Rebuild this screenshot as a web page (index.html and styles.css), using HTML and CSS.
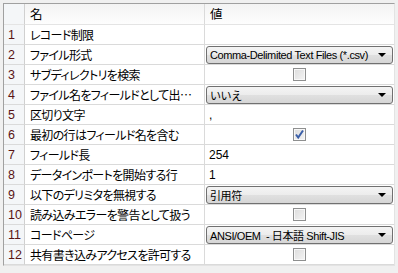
FILE: index.html
```html
<!DOCTYPE html>
<html lang="ja">
<head>
  <meta charset="UTF-8" />
  <title>プロパティ</title>
  <link rel="stylesheet" href="styles.css">
</head>
<body>
  <div class="frame">
    <div class="grid">
      <div class="cell head num"></div>
      <div class="cell head name">名</div>
      <div class="cell head value">値</div>

      <div class="cell num">1</div>
      <div class="cell name">レコード制限</div>
      <div class="cell value"></div>

      <div class="cell num">2</div>
      <div class="cell name">ファイル形式</div>
      <div class="cell value"><div class="combo"><span>Comma-Delimited Text Files (*.csv)</span><i class="arrow"></i></div></div>

      <div class="cell num">3</div>
      <div class="cell name">サブディレクトリを検索</div>
      <div class="cell value center"><span class="check"></span></div>

      <div class="cell num">4</div>
      <div class="cell name">ファイル名をフィールドとして出力する</div>
      <div class="cell value"><div class="combo"><span>いいえ</span><i class="arrow"></i></div></div>

      <div class="cell num">5</div>
      <div class="cell name">区切り文字</div>
      <div class="cell value text">,</div>

      <div class="cell num">6</div>
      <div class="cell name">最初の行はフィールド名を含む</div>
      <div class="cell value center">
        <span class="check">
          <svg width="11" height="11" viewBox="0 0 11 11"><path d="M2 5.5 L4.2 8.5 L9 1.5" fill="none" stroke="#3b5fa8" stroke-width="2"/></svg>
        </span>
      </div>

      <div class="cell num">7</div>
      <div class="cell name">フィールド長</div>
      <div class="cell value text">254</div>

      <div class="cell num">8</div>
      <div class="cell name">データインポートを開始する行</div>
      <div class="cell value text">1</div>

      <div class="cell num">9</div>
      <div class="cell name">以下のデリミタを無視する</div>
      <div class="cell value"><div class="combo"><span>引用符</span><i class="arrow"></i></div></div>

      <div class="cell num">10</div>
      <div class="cell name">読み込みエラーを警告として扱う</div>
      <div class="cell value center"><span class="check"></span></div>

      <div class="cell num">11</div>
      <div class="cell name">コードページ</div>
      <div class="cell value"><div class="combo"><span>ANSI/OEM&nbsp; - 日本語 Shift-JIS</span><i class="arrow"></i></div></div>

      <div class="cell num">12</div>
      <div class="cell name">共有書き込みアクセスを許可する</div>
      <div class="cell value center"><span class="check"></span></div>
    </div>
  </div>
</body>
</html>
```

FILE: styles.css
```css
body {
  margin: 0;
  background: #f0f0f0;
  font-family: "Liberation Sans", "Noto Sans CJK JP", sans-serif;
  font-size: 12px;
  color: #000;
}

.frame {
  margin: 3px 3px 0 3px;
  width: 390px;
  border: 1px solid #a0a0a0;
  border-right-color: #e3e3e3;
  border-bottom-color: #e3e3e3;
  background: #fff;
}

.grid {
  display: grid;
  grid-template-columns: 21px 180px 1fr;
  grid-template-rows: 21px;
  grid-auto-rows: 20px;
}

.cell {
  border-right: 1px solid #dadada;
  border-bottom: 1px solid #dadada;
  display: flex;
  align-items: center;
  overflow: hidden;
  white-space: nowrap;
}

.cell.value {
  border-right: none;
}

.head {
  background: linear-gradient(#f3f3f3, #fdfdfd);
  border-bottom-color: #e4e4e4;
}

.num {
  background: #f4f6f8;
  color: #5a1414;
  font-family: "Liberation Sans", sans-serif;
  font-size: 12.5px;
  padding-left: 4px;
  border-right-color: #d0d0d0;
}

.name {
  font-family: "Noto Sans CJK JP", sans-serif;
  font-feature-settings: "palt";
  font-size: 12px;
  letter-spacing: -0.65px;
  padding-left: 5px;
  padding-right: 2px;
  display: block;
  line-height: 19px;
  text-overflow: ellipsis;
}

.head.name, .head.value {
  font-family: "Noto Sans CJK JP", sans-serif;
  font-size: 12.5px;
  line-height: 20px;
  padding-left: 5px;
}

.text {
  padding-left: 4px;
}

.center {
  justify-content: center;
}

.combo {
  flex: 1;
  margin: 0 1px;
  height: 16px;
  border: 1px solid #707070;
  border-radius: 3px;
  background: linear-gradient(#f4f4f4, #ececec 50%, #e0e0e0 50%, #d6d6d6);
  display: flex;
  align-items: center;
  padding-left: 3px;
  font-size: 11px;
  letter-spacing: -0.4px;
}

.combo span {
  flex: 1;
  font-family: "Liberation Sans", "Noto Sans CJK JP", sans-serif;
}

.arrow {
  width: 0;
  height: 0;
  border-left: 4px solid transparent;
  border-right: 4px solid transparent;
  border-top: 4px solid #000;
  margin-right: 6px;
}

.check {
  width: 11px;
  height: 11px;
  border: 1px solid #8e8f8f;
  background: linear-gradient(135deg, #dcdcdc, #f4f4f4);
  box-shadow: inset 0 0 0 1px #f8f8f8;
  display: flex;
  align-items: center;
  justify-content: center;
}
```
